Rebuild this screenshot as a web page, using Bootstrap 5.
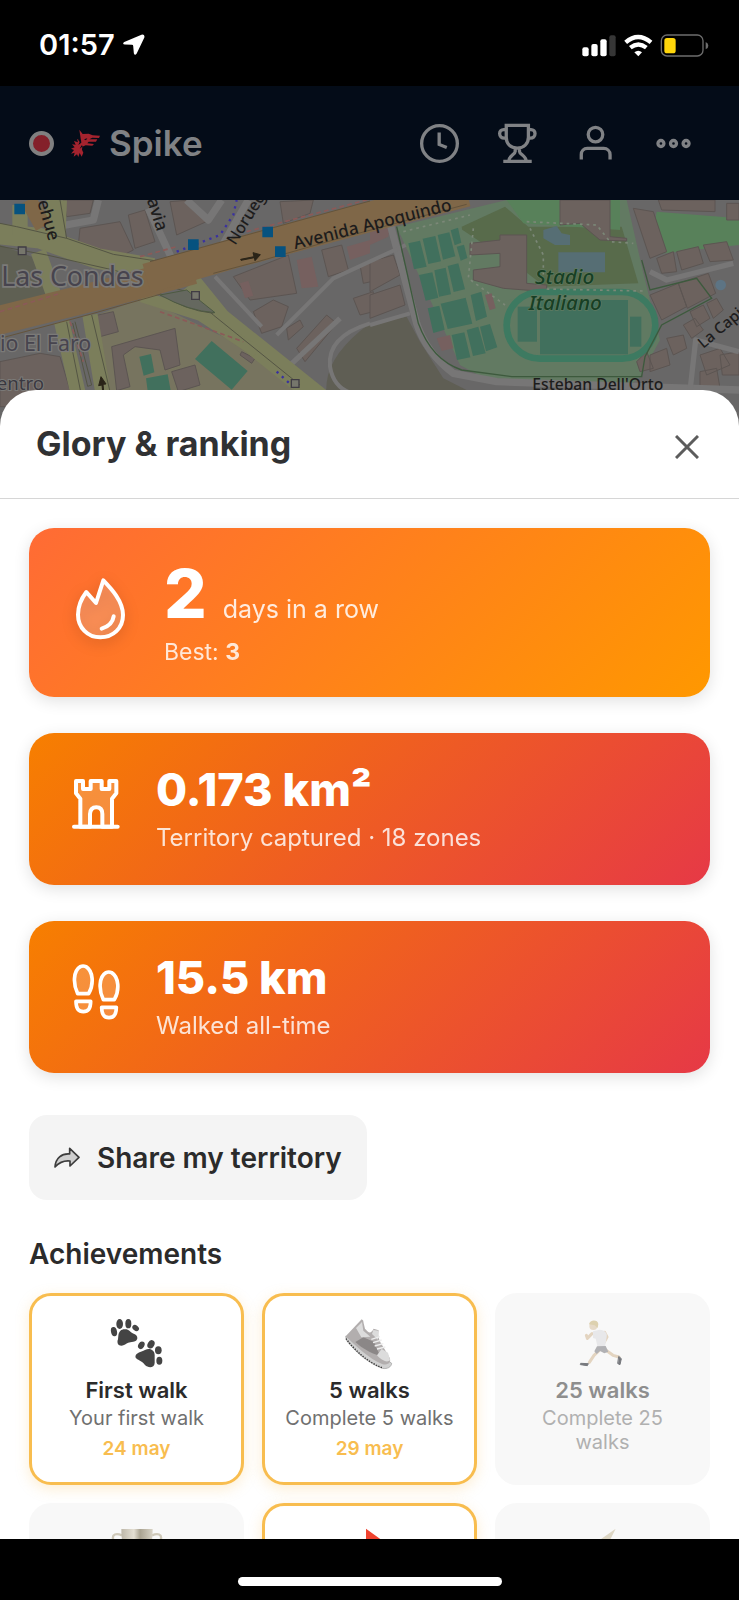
<!DOCTYPE html>
<html lang="en">
<head>
<meta charset="utf-8">
<meta name="viewport" content="width=device-width, initial-scale=1">
<title>Spike</title>
<link href="https://cdn.jsdelivr.net/npm/bootstrap@5.3.0/dist/css/bootstrap.min.css" rel="stylesheet">
<style>
  body { font-family: Inter, "Liberation Sans", sans-serif; background: #000; color: #2b2b2b; }
  svg { display: block; flex: none; }
  .screen { height: 100vh; }
  .status { height: 86px; padding: 4px 30px 0 39px; color: #fff; }
  .clock { font-size: 29px; line-height: 36px; font-weight: 600; }
  .topbar { height: 114px; padding: 0 27px 0 29px; background: #040c18; color: #808285; }
  .brand { font-size: 35px; line-height: 44px; font-weight: 600; }
  .rec { width: 25px; height: 25px; border: 4px solid #808080; background: #84202a; border-radius: 50%; padding: 0; }
  .tool { width: 78px; height: 78px; border: 0; background: none; color: inherit; padding: 0; }
  .map { height: 226px; background: #686767; }
  .map svg { width: 100%; height: 100%; }
  .map text { font-family: "Noto Sans", sans-serif; }
  .sheet { margin-top: -36px; background: #fff; border-radius: 36px 36px 0 0; min-height: 0; position: relative; }
  .sheet-head { height: 109px; padding: 0 29px 0 36px; border-bottom: 1px solid #d6d6d6; }
  .sheet-head h1 { font-size: 34px; line-height: 44px; font-weight: 700; margin: 0; color: #303133; }
  .closer { width: 47px; height: 47px; border: 0; background: none; padding: 6px 0 0; color: #5c5c5c; }
  .sheet-body { padding: 29px 29px 0; min-height: 0; overflow: hidden; }
  .hero { border-radius: 25px; color: #fff; box-shadow: 0 4px 16px rgba(0,0,0,.12); padding: 32px 36px; gap: 29px; }
  .hero svg { overflow: visible; }
  .hero.streak { background: linear-gradient(135deg, #ff6b35, #ff9800); padding: 30px 43px; gap: 35px; }
  .hero.total { background: linear-gradient(135deg, #f77f00, #e63946); }
  .flame { filter: drop-shadow(0 4px 7px rgba(0,0,0,.18)); }
  .days { font-size: 67px; line-height: 71px; font-weight: 800; }
  .unit { font-size: 25px; line-height: 30px; opacity: .85; }
  .figure-lg { font-size: 45px; line-height: 50px; font-weight: 800; }
  .sub { font-size: 23px; line-height: 30px; margin-top: 8px; opacity: .82; }
  .total .sub { font-size: 24px; }
  .stack { gap: 36px; }
  .share { margin-top: 42px; height: 85px; padding: 0 25px; gap: 17px; border: 0; border-radius: 18px; background: #f4f4f4; color: #2b2b2b; font-size: 28px; line-height: 36px; font-weight: 600; }
  .sheet-body h2 { font-size: 28px; line-height: 36px; font-weight: 600; margin: 36px 0 21px; color: #2b2b2b; }
  .awards { display: grid; grid-template-columns: repeat(3, minmax(0, 1fr)); gap: 18px; }
  .award { min-height: 192px; padding: 22px 18px 20px; border: 3px solid #f8bd4f; border-radius: 22px; background: #fff; text-align: center; box-shadow: 0 4px 14px rgba(248,189,79,.25); }
  .award.locked { border-color: #f8f8f8; background: #f8f8f8; box-shadow: none; }
  .award svg { margin: 0 auto 6px; }
  .award h3 { font-size: 22px; line-height: 28px; font-weight: 600; margin: 0 0 2px; }
  .award p { font-size: 20px; line-height: 24px; margin: 0; color: #707070; }
  .award time { display: block; font-size: 19px; line-height: 26px; margin-top: 6px; font-weight: 600; color: #f8bd4f; }
  .award.locked h3 { color: #8e8e8e; }
  .award.locked p { color: #b0b0b0; }
  .home { height: 61px; padding-top: 38px; background: #000; }
  .home span { width: 264px; height: 9px; border-radius: 5px; background: #fff; }
</style>
</head>
<body>
<div class="screen d-flex flex-column overflow-hidden">

  <div class="status d-flex align-items-center justify-content-between flex-shrink-0">
    <div class="d-flex align-items-center gap-2">
      <span class="clock">01:57</span>
      <svg width="22" height="22" viewBox="362 100 69 69" fill="#fff"><path d="M420 102q11-2 9 9l-24 50q-6 9-9-1l-2-22q0-4-4-4l-22-1q-10-2-2-8z"/></svg>
    </div>
    <svg width="127" height="23" viewBox="637 98 381 69">
      <g fill="#fff"><rect x="638" y="138" width="19" height="27" rx="6"/><rect x="665" y="128" width="19" height="37" rx="6"/><rect x="692" y="114" width="19" height="51" rx="6"/></g>
      <rect x="719" y="102" width="19" height="63" rx="6" fill="#363636"/>
      <g fill="none" stroke="#fff" stroke-width="13"><path d="M768 123q37-32 76 0"/><path d="M782 139q24-19 48 0"/></g>
      <path d="M794 153q12-9 23 0l-11 12z" fill="#fff"/>
      <rect x="875" y="101" width="125" height="63" rx="17" fill="none" stroke="#6d6d6d" stroke-width="4"/>
      <rect x="884" y="110" width="34" height="46" rx="8" fill="#ffd60a"/>
      <path d="M1008 122q8 3 8 11t-8 11z" fill="#6d6d6d"/>
    </svg>
  </div>

  <nav class="topbar d-flex align-items-center justify-content-between flex-shrink-0">
    <div class="d-flex align-items-center">
      <button class="rec" aria-label="Record"></button>
      <svg class="ms-3 me-2" width="31" height="28" viewBox="208 393 93 84">
        <path fill="#a4232e" d="M236 395l10 13 18-1 12 5 22 1-3 7-20-1-9 5h24l-4 7h-22l-4 5 20 2-5 5-20-1-10 4-1 9 4 9-5 12-6-11-4 12-4-8-10 7 3-12-11 3 9-11-9-4 11-4-8-9 11 1-5-11 12 4-3-10 12 5z"/>
        <path d="M231 424l6 8-4 9 9-7-1-8zM250 424l10-3-4 6zM243 442l-6 10 10-7z" fill="#040c18"/>
      </svg>
      <a href="#" class="brand text-decoration-none text-reset">Spike</a>
    </div>
    <div class="d-flex">
      <button class="tool d-flex align-items-center justify-content-center" aria-label="History">
        <svg width="43" height="43" viewBox="143 364 130 130" fill="none" stroke="currentColor" stroke-width="10"><circle cx="208" cy="429" r="54"/><path d="M207 396v36l23 9"/></svg>
      </button>
      <button class="tool d-flex align-items-center justify-content-center" aria-label="Ranking">
        <svg width="43" height="43" viewBox="378 364 130 130" fill="none" stroke="currentColor" stroke-width="10"><path d="M409 374H476V410c0 20-14 33-34 33s-33-13-33-33zM409 387h-8c-7 0-12 5-12 12 0 9 6 14 14 14h7M476 387h8c7 0 12 5 12 12 0 9-6 14-14 14h-7M436 444v9c0 8-19 14-19 28M449 444v9c0 8 20 14 20 28M400 483H486"/></svg>
      </button>
      <button class="tool d-flex align-items-center justify-content-center" aria-label="Profile">
        <svg width="43" height="43" viewBox="613 364 130 130" fill="none" stroke="currentColor" stroke-width="10"><circle cx="678" cy="402" r="22"/><path d="M635 477v-14c0-12 8-19 18-19h50c10 0 19 7 19 19v14"/></svg>
      </button>
      <button class="tool d-flex align-items-center justify-content-center" aria-label="More">
        <svg width="43" height="43" viewBox="849 364 130 130" fill="none" stroke="currentColor" stroke-width="10"><circle cx="876" cy="429" r="9"/><circle cx="914" cy="429" r="9"/><circle cx="952" cy="429" r="9"/></svg>
      </button>
    </div>
  </nav>

  <div class="map flex-shrink-0">
    <svg viewBox="0 15 2217 678" preserveAspectRatio="xMidYMin slice">
      <!-- land -->
      <path fill="#5f6053" d="M0 150L95 185 145 300 0 350z"/>
      <path fill="#77745f" d="M290 360L430 310 700 440 850 560 900 600V693H310z"/>
      <path fill="#5f5e54" d="M1110 385l110-20 40 75 70 110 80 40v103H1040q-70-50-60-130 10-90 130-178z"/>
      <path fill="#627a62" d="M1190 95l330-80h360l50 220 50 200-60 110-30 25h-400l-110-60z"/>
      <path fill="#586b4b" d="M1385 95l130-60 70 60h280l50 170-280 10-130-100-60-30-50 20z"/>
      <path fill="#58815a" d="M1520 15h340v90l-290-20zM1970 50l247 20v80l-270 30z"/>
      <path fill="#627a62" d="M1310 190l70-90 90 60 80 20 60 110-200 60z"/>
      <!-- blocks of buildings -->
      <g fill="#6c625e" stroke="#5c5552" stroke-width="3">
        <path d="M240 100l120-20 40 85-60 30-105-45zM385 60l50-15 30 95-60 20zM510 20l60-5 60 60-100 45zM190 15h90l-10 40-70 10zM285 362l55-12 15 60-55 15zM335 455l190-55 15 110-45 15-15-60-75-10-35 25 20 95-40 12zM515 530l70-20 15 60-65 20z"/>
        <path d="M700 245l165-65 25 115-140 20zM965 165l60-15 20 75-60 20zM760 350l60-35 45 20-20 60-60 20zM890 460l90-100 30 25-95 115zM1060 310l60-20v60l-40 10zM860 400l40-25 10 20-45 40zM1080 210l80-20v60l-70 15zM0 500l120-25 60 10 30 100-60 50H0zM725 470l40 20-10 15-35-25zM840 20l100-5-10 40-80 30z"/>
        <path d="M1410 145l90-10v-15h80v145l60 5v20l-130-10-90-25v-30l80-10v-40l-90 5zM1680 15h150v110l50 5v8l-80-3-60-50-60 5zM1900 40l60 10 40 120-50 20zM1975 15h170v35l-160-5zM1970 190l50-20 10 60-45 5zM2030 170l65-15 15 50-65 20zM2110 150l70-10 20 55-70 5zM2180 25h37v50h-37zM1950 300l85-35 25 70-75 40zM2035 265l90-30 22 60-85 45zM2070 350l40-20 20 40-40 25zM2120 325l30-15 20 35-30 25zM2050 390l35-20 25 35-35 25zM2000 430l50-10 10 40-40 20zM1950 480l50-20 10 50-60 20zM1910 500l30-30 20 50-40 10zM2100 480l60-20 30 50-70 30zM2160 480l57-10v70h-50zM2100 530l50-10 10 60-60 5zM1110 200l70-20 20 60-90 50zM1110 300l90-30 15 60-105 40z"/>
      </g>
      <g fill="#76605f"><path d="M890 195l45-10 20 90-50 5zM1040 155l70-20v40l-60 20zM720 265l25-8 15 45-25 8zM1110 100l60-10-5 35-55 25zM1455 300l20-5 12 45-18 6zM1310 430l40-10 10 40-35 8z"/></g>
      <!-- residential streets -->
      <g fill="none" stroke="#777676" stroke-width="22" stroke-linejoin="round">
        <path d="M170 95l110-20 15-60M445 40l70 150M745 15l-80 140M560 15l65 60 40-60"/>
        <path d="M1170 85l80 300q30 90 110 150l130 25 727 25"/>
        <path d="M1110 385q-130 40-120 130 10 60 60 78M1230 355l-120 35" stroke-width="12"/>
        <path d="M1950 230l50 25 200-50M2217 470l-130-35-20 180M860 520l160-150" stroke-width="16"/>
        <path d="M830 420l170-170 217-100M645 245l140 150" stroke-width="12"/>
      </g>
      <!-- avenues -->
      <g fill="none" stroke="#7b7e5b" stroke-linejoin="round">
        <path stroke-width="62" d="M-20 115L120 130 290 190 460 220M575 265L660 370 960 610M170 15l-5 120"/>
        <path stroke-width="46" d="M115 170L165 310M185 380l55 240M270 360l40 240M60 30v90"/>
        <path stroke-width="34" d="M425 305L600 360 770 470"/>
      </g>
      <g fill="none" stroke="#545544" stroke-width="3"><path d="M-20 150L140 180 340 225 560 290 640 360 900 570M0 85L50 95 200 130 340 178 470 198M200 380l50 250M225 380l50 190-12 4-45-190M275 360l60 250M640 355q-90-10-160-60M180 15l20 115"/></g>
      <g fill="none" stroke="#7f6748" stroke-linejoin="round">
        <path stroke-width="86" d="M-20 380L300 300 580 225"/>
        <path stroke-width="90" d="M440 250L720 170 1110 65 1400 -10"/>
        <path stroke-width="50" d="M85 15l45 80"/>
      </g>
      <g fill="none" stroke="#64543c" stroke-width="3"><path d="M450 200L740 120 1110 18M640 235L780 198 1000 135 1400 28M0 430L270 358 480 298"/></g>
      <g fill="none" stroke="#8b5a58" stroke-width="5" stroke-dasharray="14 10"><path d="M0 350L180 295M420 185l110-30M740 110L1110 12M210 380l40 120M480 350l250 90"/></g>
      <g fill="none" stroke="#3a31a0" stroke-width="7" stroke-dasharray="7 14"><path d="M530 170l130-50 40-60 10-45M830 530l55 50"/></g>
      <path d="M480 300l80-15 85 68q-80-5-165-53z" fill="#65685f" stroke="#4d5a42" stroke-width="3"/>
      <!-- courts and stadium -->
      <g fill="#41705d">
        <path d="M635 438l108 90-48 56-110-92zM418 485l35-8 10 55-32 10zM438 550l65-12 12 65h-70z"/>
        <path d="M1225 145l35-8 20 78-38 8zM1268 131l38-8 17 76-38 8zM1313 120l35-8 18 72-37 10zM1352 106l22-8 10 45-20 8zM1370 155l22-6 10 40-20 8zM1257 240l40-8 18 76-38 9zM1303 226l34-8 16 80-36 7zM1343 213l32-8 20 78-34 8zM1283 340l35-8 16 72-34 10zM1322 326l75-18 20 78-74 16zM1412 300l32-10 17 75-33 13zM1355 420l38-8 18 75-40 8zM1400 405l35-10 22 80-38 8zM1440 395l30-8 22 70-34 12z"/>
      </g>
      <rect x="1520" y="291" width="446" height="200" rx="100" fill="#607a62" stroke="#3d7a61" stroke-width="20"/>
      <g fill="#41705d"><rect x="1620" y="315" width="264" height="163"/><rect x="1553" y="335" width="58" height="105"/><rect x="1890" y="365" width="34" height="90"/></g>
      <g fill="#566e74"><path d="M1675 172h140v60h-140zM1630 105l40-12 15 22 25 5v30h-45l-35-20z"/></g>
      <circle cx="2162" cy="270" r="16" fill="#5d7484"/>
      <g fill="none" stroke="#7c8878" stroke-width="5" stroke-dasharray="8 12"><path d="M1420 100l-15 150 110 80M1580 80l210 10 40 50 70 5M1590 100l40 80v60M1640 282l290 6M1210 110l200-50"/></g>
      <g fill="none" stroke="#3d5a3d" stroke-width="4"><path d="M1190 95l65 290q40 110 130 140l150 20h390l10-60 50-95 150-80-45-60-140 35-25-90"/></g>
      <!-- stops and arrows -->
      <g fill="#06527f"><path d="M43 26h32v32H43zM564 133h32v32h-32zM787 95h32v32h-32zM825 154h32v32h-32z"/></g>
      <g fill="#76766c" stroke="#403c44" stroke-width="4"><path d="M55 156h23v23H55zM575 290h23v23h-23zM874 554h23v23h-23z"/></g>
      <g fill="#2a2418" stroke="#2a2418" stroke-width="3"><path d="M722 193l40-8-3-12 22 6-16 18-2-9-40 8zM310 610l-4-40-10 2 7-27 15 22-9 1 4 42z"/></g>
      <!-- labels -->
      <g fill="#47444e" stroke="#7b7a78" stroke-width="10" paint-order="stroke" font-size="80">
        <text x="4" y="274">Las Condes</text>
        <text x="0" y="468" font-size="64" stroke-width="8">io El Faro</text>
        <text x="-10" y="586" font-size="56" fill="#3a3840" stroke-width="6">entro</text>
      </g>
      <g fill="#1d1c1c" font-size="52" font-weight="500">
        <text transform="translate(885 163) rotate(-14)">Avenida Apoquindo</text>
        <text transform="translate(112 20) rotate(74)">ehue</text>
        <text transform="translate(440 15) rotate(72)">avia</text>
        <text transform="translate(706 152) rotate(-58)" font-size="48">Norueg</text>
        <text transform="translate(2110 462) rotate(-40)" font-size="46">La Capi</text>
        <text x="1597" y="586" font-size="47">Esteban Dell'Orto</text>
      </g>
      <g fill="#173f24" font-size="62" font-style="italic" font-weight="500" stroke="#5f7a60" stroke-width="4" paint-order="stroke"><text x="1605" y="268">Stadio</text><text x="1586" y="346">Italiano</text></g>
    </svg>
  </div>

  <main class="sheet d-flex flex-column flex-grow-1">
    <header class="sheet-head d-flex align-items-center justify-content-between flex-shrink-0">
      <h1>Glory &amp; ranking</h1>
      <button class="closer d-flex align-items-center justify-content-center" aria-label="Close">
        <svg width="24" height="24" viewBox="0 0 24 24" fill="none" stroke="currentColor" stroke-width="3"><path d="M1 1l22 22M23 1L1 23"/></svg>
      </button>
    </header>

    <div class="sheet-body flex-grow-1">
      <div class="stack d-flex flex-column">
        <section class="hero streak d-flex align-items-center">
          <svg class="flame" width="57" height="64" viewBox="95 89 171 192" fill="none" stroke="#fff" stroke-width="12" stroke-linejoin="round" stroke-linecap="round"><path fill="#fff" fill-opacity=".2" d="M138 122l29 33 22-68c24 25 59 62 59 104 0 40-30 67-68 67s-67-29-67-68c0-25 9-47 25-68z"/><path d="M220 195q-4 27-36 37"/></svg>
          <div>
            <div class="d-flex align-items-baseline gap-3"><span class="days">2</span><span class="unit">days in a row</span></div>
            <div class="sub">Best: <strong>3</strong></div>
          </div>
        </section>
        <section class="hero total d-flex align-items-center">
          <svg width="62" height="62" viewBox="194 191 186 186" fill="none" stroke="#fff" stroke-width="12" stroke-linejoin="round" stroke-linecap="round"><path fill="#fff" fill-opacity=".2" d="M240 337v-84l-13-16v-37h21v24h23v-24h33v24h23v-24h21v37l-13 16v84h-29v-38q0-20-18-20t-19 20v38z"/><path d="M221 337H352"/></svg>
          <div>
            <div class="figure-lg">0.173 km²</div>
            <div class="sub">Territory captured · 18 zones</div>
          </div>
        </section>
        <section class="hero total d-flex align-items-center">
          <svg width="62" height="62" viewBox="194 751 186 186" fill="#fff" fill-opacity=".2" stroke="#fff" stroke-width="11" stroke-linejoin="round"><path d="M232 834c-14-28-14-68 8-81q8-4 17 0c22 14 24 53 8 81zM309 852c-14-28-14-68 8-81q8-4 17 0c22 14 24 53 8 81zM227 857h44c0 21-6 31-22 31s-22-10-22-31zM304 875h44c0 21-6 31-22 31s-22-10-22-31z"/></svg>
          <div>
            <div class="figure-lg">15.5 km</div>
            <div class="sub">Walked all-time</div>
          </div>
        </section>
      </div>

      <button class="share d-inline-flex align-items-center">
        <svg width="26" height="22" viewBox="164 143 78 66"><path d="M167 203c2-27 20-41 44-39v-17l28 27-27 26v-15c-17-2-30 2-45 18z" fill="#cfcfcf" stroke="#3c3c3c" stroke-width="5" stroke-linejoin="round"/></svg>
        Share my territory
      </button>

      <h2>Achievements</h2>
      <div class="awards">
        <article class="award">
          <svg width="56" height="52" viewBox="324 115 168 156" fill="#444">
            <ellipse cx="339" cy="156" rx="9" ry="14" transform="rotate(-12 339 156)"/><ellipse cx="356" cy="133" rx="10" ry="15"/><ellipse cx="382" cy="132" rx="9" ry="14"/><ellipse cx="404" cy="145" rx="8" ry="11" transform="rotate(-50 404 145)"/>
            <path d="M352 168c2-14 10-20 20-19 14 0 13 8 26 13 15 5 15 22-1 24-14 1-18 4-28 10-12 7-24-2-18-17z"/>
            <ellipse cx="421" cy="197" rx="9" ry="12" transform="rotate(30 421 197)"/><ellipse cx="450" cy="194" rx="10" ry="13" transform="rotate(30 450 194)"/><ellipse cx="472" cy="212" rx="10" ry="12"/><ellipse cx="475" cy="243" rx="9" ry="12"/>
            <path d="M408 222c8-7 15-5 24-11 14-8 29 0 29 15v24c-1 16-20 15-29 6-6-8-11-11-20-16-9-4-12-11-4-18z"/>
          </svg>
          <h3>First walk</h3><p>Your first walk</p><time>24 may</time>
        </article>
        <article class="award">
          <svg width="56" height="52" viewBox="0 0 168 156">
            <path d="M11 55l3 13c29 38 70 70 107 83 15 3 27-4 28-15l-10-8z" fill="#d0d0d0" stroke="#999" stroke-width="2"/>
            <path d="M11 55L59 4q6 2 6 12l4 16c12 14 17 16 26 0l15 5c-4 19 2 32 12 47l20 34c8 14-3 26-22 20C82 123 42 85 11 55z" fill="#b2aeae"/>
            <path d="M40 72l24-14 31 13 20 44c-32-12-52-22-75-43z" fill="#8b8787"/>
            <path d="M42 30l18-18 4 26 21 18-27 2zM94 36l16 2-2 27-18-17zM105 112l14-19 19 11 6 22c-9 12-31-4-39-14z" fill="#dcdcdc"/>
            <path d="M88 64l26-8M93 74l26-8M98 84l26-7M105 93l25-6" stroke="#eee" stroke-width="4"/>
            <path d="M12 62c29 38 69 73 110 88" stroke="#333" stroke-width="4" stroke-dasharray="4 4" fill="none"/>
          </svg>
          <h3>5 walks</h3><p>Complete 5 walks</p><time>29 may</time>
        </article>
        <article class="award locked">
          <svg width="56" height="52" viewBox="614 115 168 156" fill="none" stroke-linecap="round" stroke-linejoin="round">
            <path d="M703 158l7 14-9 17M665 162l-14 14-3-9M692 207l-21 20-14 21M706 211l22 16 18 5" stroke="#e3d4c0" stroke-width="9"/>
            <path d="M668 155l20-5c16 2 24 10 21 22l-5 30-22 1-6-26-8-2z" fill="#e8e8ea"/>
            <path d="M680 200l26-1 8 17-12 5-13-7-10 9-7-8z" fill="#b1b1b4"/>
            <circle cx="669" cy="139" r="12" fill="#e6dac8"/><path d="M656 134c2-15 27-15 28-1l-2 12-9-8z" fill="#ddd1af"/>
            <path d="M632 251l22 1-3 6-20-3zM746 231l7 6-4 18-6-3z" fill="#77797e" stroke="#77797e" stroke-width="3"/>
          </svg>
          <h3>25 walks</h3><p>Complete 25 walks</p>
        </article>
        <article class="award locked">
          <svg width="56" height="52" viewBox="0 0 168 156"><defs><linearGradient id="cup"><stop offset="0" stop-color="#bdb7a9"/><stop offset=".4" stop-color="#e4dfd3"/><stop offset=".6" stop-color="#aaa391"/><stop offset="1" stop-color="#d8d3c6"/></linearGradient></defs><path d="M39 22C20 14 10 20 12 32s20 28 42 30M129 22c19-8 29-2 27 10s-20 28-42 30" fill="none" stroke="#cfc9b9" stroke-width="7"/><path d="M37 3h94q0 80-37 98v30h26v20H48v-20h26v-30Q37 83 37 3z" fill="url(#cup)"/></svg>
        </article>
        <article class="award">
          <svg width="56" height="52" viewBox="0 0 168 156"><path d="M72 2l76 55-70 48v48h-6z" fill="#f0432f"/></svg>
        </article>
        <article class="award locked">
          <svg width="56" height="52" viewBox="0 0 168 156"><path d="M122 2L60 46 42 86h34l-28 66 76-88H91z" fill="#ddd6c4"/></svg>
        </article>
      </div>
    </div>
  </main>

  <div class="home d-flex justify-content-center align-items-start flex-shrink-0"><span></span></div>
</div>
<script src="https://cdn.jsdelivr.net/npm/bootstrap@5.3.0/dist/js/bootstrap.bundle.min.js"></script>
</body>
</html>
